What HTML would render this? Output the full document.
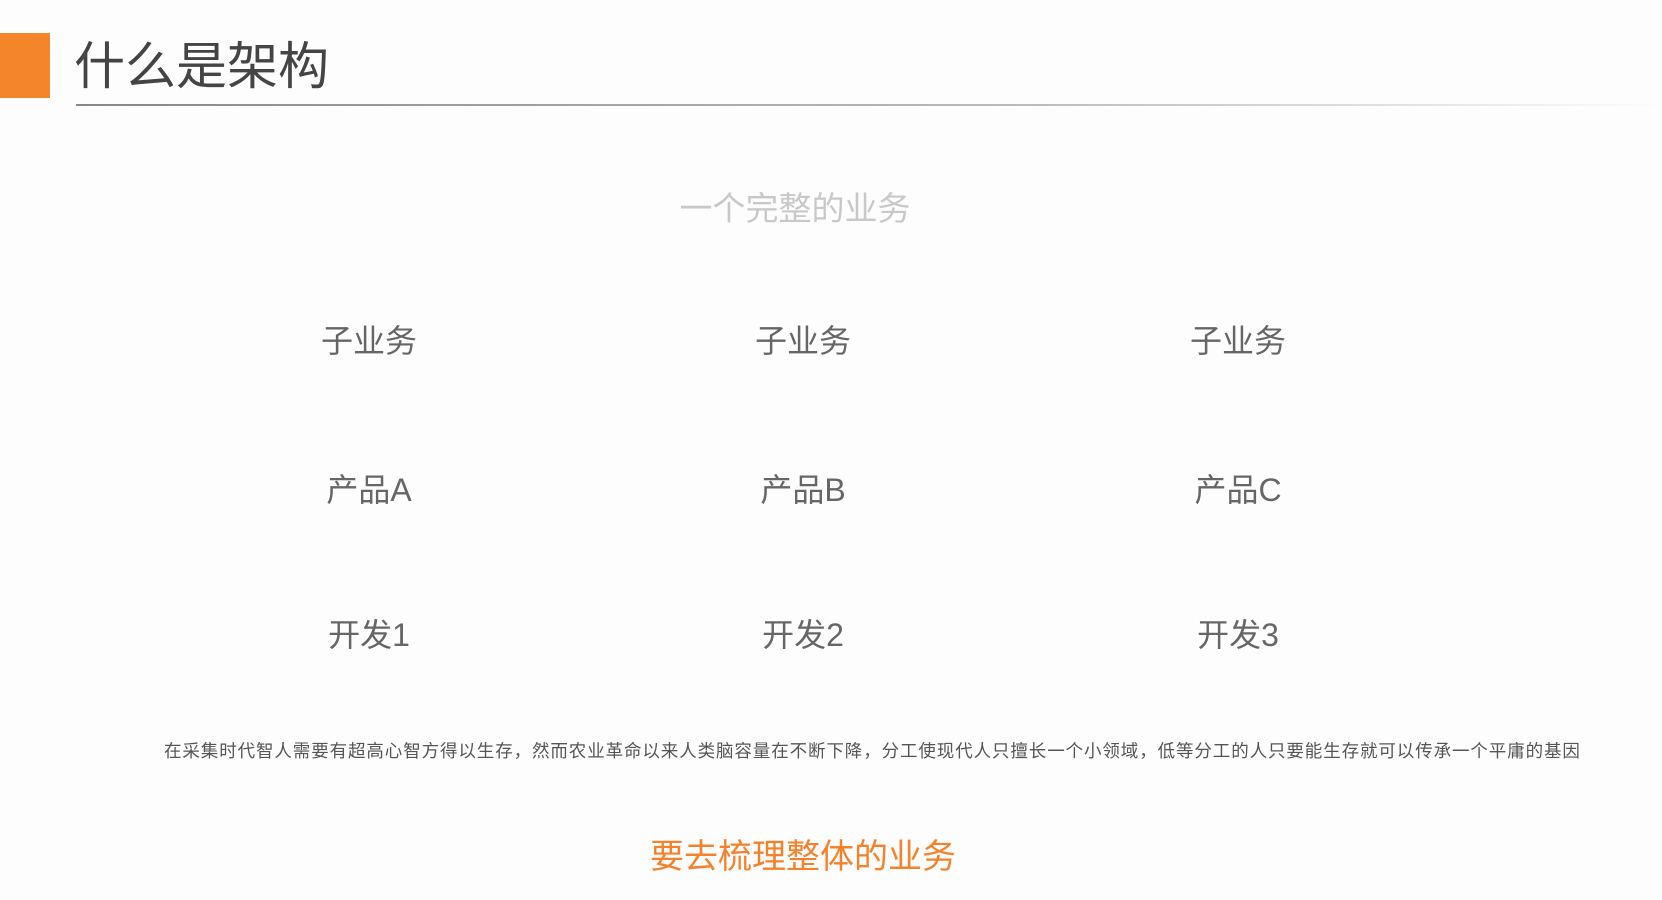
<!DOCTYPE html>
<html><head><meta charset="utf-8"><style>
html,body{margin:0;padding:0;}
body{width:1662px;height:900px;position:relative;overflow:hidden;background:#fdfdfd;font-family:"Liberation Sans","Noto Sans CJK SC",sans-serif;}
.bar{position:absolute;left:0;top:33px;width:50px;height:65px;background:#f5852a;}
.title{position:absolute;left:74px;top:37px;font-size:51px;color:#444;line-height:60px;}
.line{position:absolute;left:76px;top:104px;width:1586px;height:2px;background:linear-gradient(to right,#888,#bbb 60%,rgba(255,255,255,0));}
.t{position:absolute;transform:translateX(-50%);white-space:nowrap;}
.sub{left:795px;top:182px;font-size:33px;color:#c8c8c8;}
.c{font-size:32px;color:#666;}
.small{position:absolute;left:164px;top:738px;font-size:17.5px;color:#555;letter-spacing:0.9px;white-space:nowrap;}
.or{left:803px;top:829px;font-size:34px;color:#f5822a;}
</style></head><body>
<div class="bar"></div>
<div class="title">什么是架构</div>
<div class="line"></div>
<div class="t sub">一个完整的业务</div>
<div class="t c" style="left:369px;top:316px">子业务</div>
<div class="t c" style="left:803px;top:316px">子业务</div>
<div class="t c" style="left:1238px;top:316px">子业务</div>
<div class="t c" style="left:369px;top:465px">产品A</div>
<div class="t c" style="left:803px;top:465px">产品B</div>
<div class="t c" style="left:1238px;top:465px">产品C</div>
<div class="t c" style="left:369px;top:610px">开发1</div>
<div class="t c" style="left:803px;top:610px">开发2</div>
<div class="t c" style="left:1238px;top:610px">开发3</div>
<div class="small">在采集时代智人需要有超高心智方得以生存，然而农业革命以来人类脑容量在不断下降，分工使现代人只擅长一个小领域，低等分工的人只要能生存就可以传承一个平庸的基因</div>
<div class="t or">要去梳理整体的业务</div>
</body></html>
